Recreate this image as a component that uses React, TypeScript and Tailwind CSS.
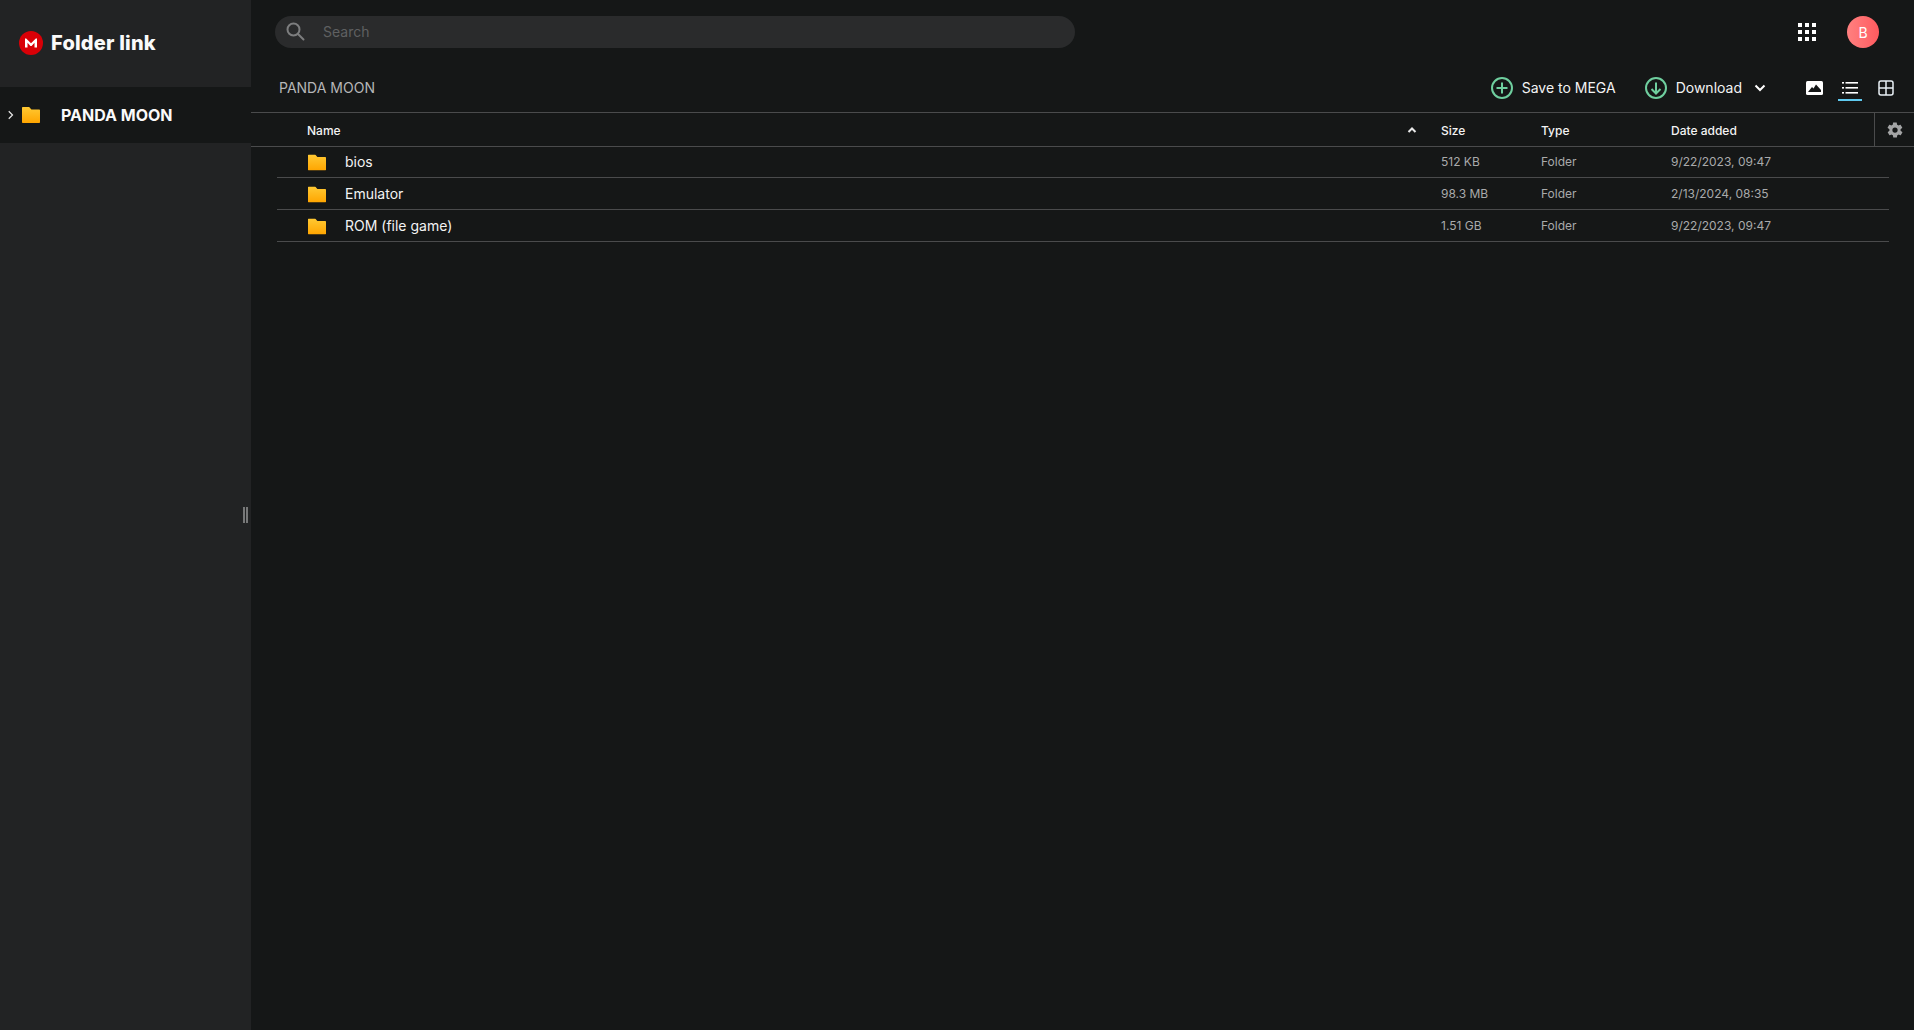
const rows = [
  { name: 'bios', size: '512 KB', date: '9/22/2023, 09:47' },
  { name: 'Emulator', size: '98.3 MB', date: '2/13/2024, 08:35' },
  { name: 'ROM (file game)', size: '1.51 GB', date: '9/22/2023, 09:47' },
];

function FolderIcon({ className }: { className: string }) {
  return (
    <svg viewBox="0 0 18 16" className={className}>
      <defs>
        <linearGradient id="folderFill" x1="0" y1="0" x2="0" y2="1">
          <stop offset="0" stopColor="#ffc933" />
          <stop offset="1" stopColor="#ffa500" />
        </linearGradient>
      </defs>
      <path
        d="M1 0h5.6c.4 0 .7.2 1 .4L9.4 2.4H17c.6 0 1 .4 1 1V15c0 .6-.4 1-1 1H1c-.6 0-1-.4-1-1V1c0-.6.4-1 1-1z"
        fill="url(#folderFill)"
      />
    </svg>
  );
}

function MegaLogo() {
  return (
    <svg viewBox="0 0 24 24" className="w-6 h-6 shrink-0">
      <circle cx="12" cy="12" r="12" fill="#d90007" />
      <path d="M6 16.5V7.6h1.2L12 12.3l4.8-4.7H18v8.9h-2.5v-4.7L12.6 15h-1.2l-2.9-3.2v4.7z" fill="#fff" />
    </svg>
  );
}

export default function App() {
  return (
    <div className="flex h-[1030px] w-[1914px] overflow-hidden bg-[#151717] font-['Inter',sans-serif] text-white">
      {/* sidebar */}
      <aside className="relative w-[251px] shrink-0 bg-[#222324]">
        <div className="flex h-[87px] items-center pl-[19px] pb-[1px]">
          <MegaLogo />
          <span className="ml-[8px] text-[20px] font-extrabold tracking-[0.2px] text-[#fafafa]">Folder link</span>
        </div>
        <div className="flex h-[56px] items-center bg-[#151717]">
          <svg viewBox="0 0 8 12" className="ml-[8px] h-[10px] w-[6px]" fill="none" stroke="#e8e8e8" strokeWidth="1.6">
            <path d="M1 1l5 5-5 5" />
          </svg>
          <FolderIcon className="ml-[8px] h-[16px] w-[18px]" />
          <span className="ml-[21px] text-[16px] font-bold text-[#fafafa]">PANDA MOON</span>
        </div>
        <div className="absolute left-[243px] top-[507px] flex gap-[1px]">
          <div className="h-[16px] w-[2px] bg-[#777878]" />
          <div className="h-[16px] w-[2px] bg-[#777878]" />
        </div>
      </aside>

      {/* main */}
      <main className="flex min-w-0 flex-1 flex-col">
        <div className="flex h-[64px] items-center pl-[24px] pr-[35px]">
          <div className="flex h-[32px] w-[800px] items-center rounded-full bg-[#2a2b2c] pb-[2px] pl-[10px]">
            <svg viewBox="0 0 20 20" className="h-[20px] w-[20px]" fill="none" stroke="#7d7e7f" strokeWidth="2">
              <circle cx="8.5" cy="8.5" r="6" />
              <path d="M13 13l5.5 5.5" strokeLinecap="round" />
            </svg>
            <span className="ml-[18px] text-[14px] text-[#5f6061]">Search</span>
          </div>
          <svg viewBox="0 0 20 20" className="ml-auto h-[20px] w-[20px]" fill="#fff">
            <rect x="1" y="1" width="4" height="4" />
            <rect x="8" y="1" width="4" height="4" />
            <rect x="15" y="1" width="4" height="4" />
            <rect x="1" y="8" width="4" height="4" />
            <rect x="8" y="8" width="4" height="4" />
            <rect x="15" y="8" width="4" height="4" />
            <rect x="1" y="15" width="4" height="4" />
            <rect x="8" y="15" width="4" height="4" />
            <rect x="15" y="15" width="4" height="4" />
          </svg>
          <div className="ml-[30px] flex h-[32px] w-[32px] items-center justify-center rounded-full bg-gradient-to-r from-[#ff8080] to-[#ff5a5f] text-[14px]">B</div>
        </div>

        <div className="flex h-[48px] items-center pl-[28px] pr-[20px]">
          <span className="pb-[1px] text-[14px] text-[#b5b6b7]">PANDA MOON</span>
          <div className="ml-auto flex items-center">
            <svg viewBox="0 0 24 24" className="h-[24px] w-[24px]" fill="none" stroke="#6fcf9f" strokeWidth="2">
              <circle cx="12" cy="12" r="10" />
              <path d="M12 6.5v11M6.5 12h11" />
            </svg>
            <span className="ml-[8px] pb-[1px] text-[14px] text-[#f3f3f3]">Save to MEGA</span>
            <svg viewBox="0 0 24 24" className="ml-[28px] h-[24px] w-[24px]" fill="none" stroke="#6fcf9f" strokeWidth="2">
              <circle cx="12" cy="12" r="10" />
              <path d="M12 6.5v11M7.5 13l4.5 4.5 4.5-4.5" />
            </svg>
            <span className="ml-[8px] pb-[1px] text-[14px] text-[#f3f3f3]">Download</span>
            <svg viewBox="0 0 12 8" className="ml-[12px] h-[8px] w-[12px]" fill="none" stroke="#fff" strokeWidth="2">
              <path d="M1.5 1.5L6 6l4.5-4.5" />
            </svg>
            <svg viewBox="0 0 17 14" className="ml-[40px] h-[14px] w-[17px]">
              <rect width="17" height="14" rx="1.5" fill="#fff" />
              <path d="M2 11l4-5 1.5 1.5L10 3.5 15 9v2z" fill="#151717" />
            </svg>
            <div className="relative ml-[15px] flex h-[24px] w-[24px] items-center justify-center">
              <svg viewBox="0 0 16 12" className="h-[12px] w-[16px]" fill="#fff">
                <rect x="0" y="0" width="2" height="1.6" />
                <rect x="3.5" y="0" width="12.5" height="1.6" />
                <rect x="0" y="5" width="2" height="1.6" />
                <rect x="3.5" y="5" width="12.5" height="1.6" />
                <rect x="0" y="10" width="2" height="1.6" />
                <rect x="3.5" y="10" width="12.5" height="1.6" />
              </svg>
              <div className="absolute left-0 top-[23px] h-[2px] w-[24px] bg-[#5fc9ef]" />
            </div>
            <svg viewBox="0 0 16 16" className="ml-[16px] h-[16px] w-[16px]" fill="none" stroke="#e8f0f5" strokeWidth="1.5">
              <rect x="1" y="1" width="14" height="14" rx="2" />
              <path d="M8 1v14M1 8h14" />
            </svg>
          </div>
        </div>

        {/* table head */}
        <div className="flex h-[35px] items-center border-y border-[#4a4b4c] text-[12px] font-medium text-[#f3f3f3]">
          <div className="flex flex-1 items-center pl-[56px]">
            <span className="pt-[2px]">Name</span>
            <svg viewBox="0 0 10 6" className="ml-auto mr-[24px] h-[6px] w-[10px]" fill="none" stroke="#e8e8e8" strokeWidth="2">
              <path d="M1.5 5L5 1.5 8.5 5" />
            </svg>
          </div>
          <div className="w-[100px] pt-[2px]">Size</div>
          <div className="w-[130px] pt-[2px]">Type</div>
          <div className="w-[203px] pt-[2px]">Date added</div>
          <div className="flex h-full w-[40px] items-center justify-center border-l border-[#4a4b4c]">
            <svg viewBox="0 0 24 24" className="h-[18px] w-[18px]" fill="#a3a4a5">
              <path d="M19.4 13c.1-.3.1-.7.1-1s0-.7-.1-1l2.1-1.6c.2-.2.2-.4.1-.6l-2-3.5c-.1-.2-.4-.3-.6-.2l-2.5 1c-.5-.4-1.1-.7-1.7-1l-.4-2.6c0-.3-.2-.5-.5-.5h-4c-.3 0-.5.2-.5.4l-.4 2.700c-.6.3-1.200.6-1.700 1l-2.500-1c-.2-.1-.5 0-.6.2l-2 3.500c-.1.2-.1.4.1.6L4.600 11c-.1.3-.1.7-.1 1s0 .7.1 1l-2.100 1.600c-.2.2-.2.4-.1.6l2 3.500c.1.2.4.3.6.2l2.500-1c.5.4 1.100.7 1.700 1l.4 2.600c0 .3.2.5.5.5h4c.3 0 .5-.2.5-.4l.4-2.700c.6-.3 1.200-.6 1.700-1l2.500 1c.2.1.5 0 .6-.2l2-3.500c.1-.2.1-.4-.1-.6L19.400 13zM12 15.500a3.500 3.500 0 1 1 0-7 3.500 3.500 0 0 1 0 7z" />
            </svg>
          </div>
        </div>

        {/* rows */}
        <div className="-mt-[1px] ml-[26px] mr-[25px]">
          {rows.map((row) => (
            <div key={row.name} className="flex h-[32px] items-center border-b border-[#4a4b4c]">
              <div className="flex flex-1 items-center pl-[31px]">
                <FolderIcon className="h-[16px] w-[18px] translate-y-[0.5px]" />
                <span className="ml-[19px] text-[14px] text-[#f3f3f3]">{row.name}</span>
              </div>
              <div className="w-[100px] text-[12px] text-[#a9aaab]">{row.size}</div>
              <div className="w-[130px] text-[12px] text-[#a9aaab]">Folder</div>
              <div className="w-[218px] text-[12px] text-[#a9aaab]">{row.date}</div>
            </div>
          ))}
        </div>
      </main>
    </div>
  );
}
